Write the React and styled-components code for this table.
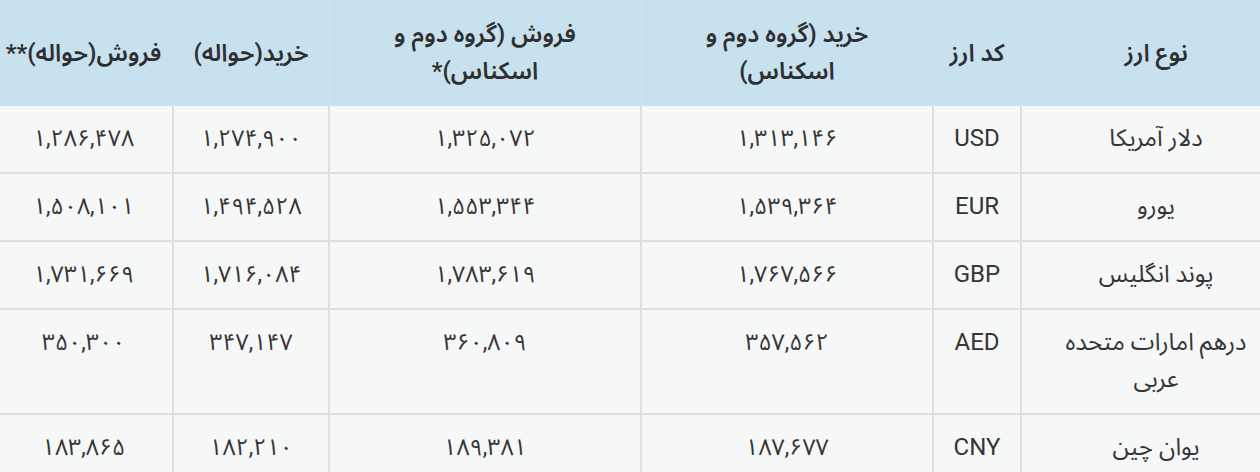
import React from "react";
import styled, { createGlobalStyle } from "styled-components";

const Global = createGlobalStyle`
  html, body { margin: 0; padding: 0; background: #ffffff; }
  body { font-family: Roboto, "Noto Sans Arabic", "Vazirmatn", "DejaVu Sans", sans-serif; }
`;

const Viewport = styled.div`
  width: 1260px;
  height: 472px;
  overflow: hidden;
  background: #f6f7f7;
`;

const Table = styled.table`
  direction: rtl;
  margin-left: -7px;
  width: 1297px;
  border-collapse: collapse;
  table-layout: fixed;
  color: #353535;
  font-size: 24px;
  line-height: 37px;
`;

const Head = styled.th`
  background: #c7e1ef;
  font-weight: 600;
  text-align: center;
  vertical-align: middle;
  padding: 16px 6px;
  border-left: 1px solid #d2e6f1;
  color: #2f2f2f;
  white-space: nowrap;
`;

const Cell = styled.td`
  background: #f6f7f7;
  text-align: center;
  vertical-align: top;
  padding: 14px 6px 15px;
  border: 2px solid #dedfe0;
  border-top: none;
`;

const Code = styled.span`
  font-size: 24px;
`;

const Num = styled.span`
  direction: ltr;
  unicode-bidi: isolate;
  font-size: 23px;
`;

const columns = [270, 88, 292, 312, 156, 179];

const headers = [
  "نوع ارز",
  "کد ارز",
  ["خرید (گروه دوم و", "اسکناس)"],
  ["فروش (گروه دوم و", "اسکناس)*"],
  "خرید(حواله)",
  "فروش(حواله)**",
];

const rows = [
  ["دلار آمریکا", "USD", "۱,۳۱۳,۱۴۶", "۱,۳۲۵,۰۷۲", "۱,۲۷۴,۹۰۰", "۱,۲۸۶,۴۷۸"],
  ["یورو", "EUR", "۱,۵۳۹,۳۶۴", "۱,۵۵۳,۳۴۴", "۱,۴۹۴,۵۲۸", "۱,۵۰۸,۱۰۱"],
  ["پوند انگلیس", "GBP", "۱,۷۶۷,۵۶۶", "۱,۷۸۳,۶۱۹", "۱,۷۱۶,۰۸۴", "۱,۷۳۱,۶۶۹"],
  [["درهم امارات متحده", "عربی"], "AED", "۳۵۷,۵۶۲", "۳۶۰,۸۰۹", "۳۴۷,۱۴۷", "۳۵۰,۳۰۰"],
  ["یوان چین", "CNY", "۱۸۷,۶۷۷", "۱۸۹,۳۸۱", "۱۸۲,۲۱۰", "۱۸۳,۸۶۵"],
];

const renderText = (t) =>
  Array.isArray(t) ? (
    <>
      {t[0]}
      <br />
      {t[1]}
    </>
  ) : (
    t
  );

export default function App() {
  return (
    <>
      <Global />
      <Viewport>
        <Table>
          <colgroup>
            {columns.map((w, i) => (
              <col key={i} style={{ width: w }} />
            ))}
          </colgroup>
          <thead>
            <tr>
              {headers.map((h, i) => (
                <Head key={i}>{renderText(h)}</Head>
              ))}
            </tr>
          </thead>
          <tbody>
            {rows.map((r, ri) => (
              <tr key={ri}>
                {r.map((c, ci) => (
                  <Cell key={ci}>
                    {ci === 1 ? (
                      <Code>{c}</Code>
                    ) : ci >= 2 ? (
                      <Num>{c}</Num>
                    ) : (
                      renderText(c)
                    )}
                  </Cell>
                ))}
              </tr>
            ))}
          </tbody>
        </Table>
      </Viewport>
    </>
  );
}
